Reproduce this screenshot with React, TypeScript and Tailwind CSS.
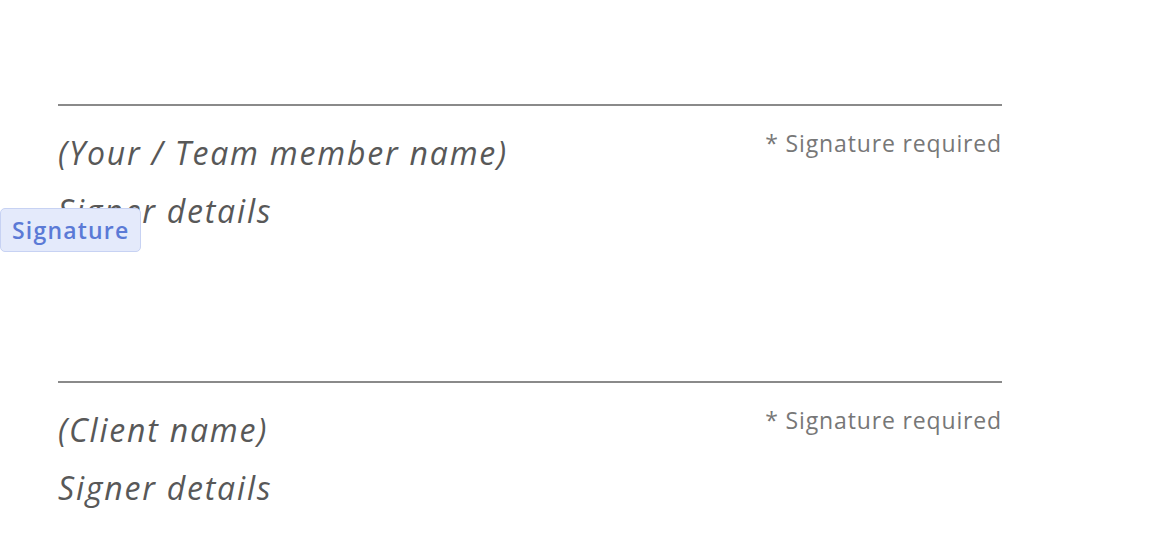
import React from "react";

function SignerBlock({ name, badge }: { name: string; badge?: boolean }) {
  return (
    <div className="relative w-[944px]">
      <div className="h-[2px] w-full bg-[#8a8a8a]" />
      <div className="flex items-start justify-between">
        <div className="pt-[25px] text-[32px] italic leading-[44px] tracking-[1.8px] text-[#585858]">{name}</div>
        <div className="pt-[22px] text-[23px] leading-[30px] tracking-[0.85px] text-[#777]">* Signature required</div>
      </div>
      <div className="pt-[14px] text-[32px] italic leading-[44px] tracking-[1.8px] text-[#585858]">Signer details</div>
      {badge && (
        <div className="absolute left-[-58px] top-[104px] rounded-[5px] border border-[#c7d2f3] bg-[#e4eafb] px-[11px] py-[5px] text-[23px] font-semibold leading-[32px] tracking-[1.2px] text-[#5b7ad6]">
          Signature
        </div>
      )}
    </div>
  );
}

export default function App() {
  return (
    <div
      className="h-[558px] w-[1152px] overflow-hidden bg-white pl-[58px] pt-[104px]"
      style={{ fontFamily: '"Open Sans", "Lato", sans-serif' }}
    >
      <div className="flex flex-col gap-[148px]">
        <SignerBlock name="(Your / Team member name)" badge />
        <SignerBlock name="(Client name)" />
      </div>
    </div>
  );
}
